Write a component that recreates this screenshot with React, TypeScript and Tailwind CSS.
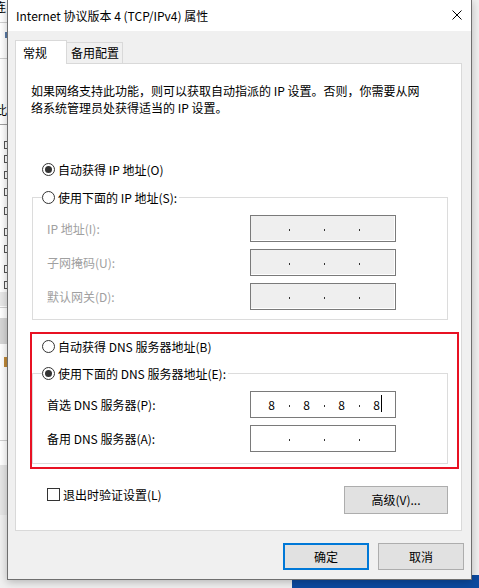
import React from "react";

const FONT = { fontFamily: "'Noto Sans CJK SC', 'Noto Sans', sans-serif" };

function Radio({ checked }: { checked?: boolean }) {
  return (
    <span className="w-[13px] h-[13px] rounded-full border border-[#333333] bg-white flex items-center justify-center shrink-0">
      {checked && <span className="w-[7px] h-[7px] rounded-full bg-[#333333]" />}
    </span>
  );
}

function IpBox({ disabled, values, cursor }: { disabled?: boolean; values?: string[]; cursor?: boolean }) {
  const v = values ?? ["", "", "", ""];
  return (
    <div
      className={
        "w-[146px] h-[27px] border border-[#7a7a7a] flex items-center pl-[5px] " +
        (disabled ? "bg-[#efefef] shadow-[inset_-1px_-1px_0_#ffffff]" : "bg-white")
      }
    >
      {v.map((d, i) => (
        <React.Fragment key={i}>
          <span className="w-[31px] h-[25px] flex items-center justify-center text-[12px] text-black relative">
            {d}
            {cursor && i === 3 && <span className="absolute left-[20px] top-[3px] w-[1px] h-[17px] bg-black" />}
          </span>
          {i < 3 && (
            <span className="w-[4px] h-[25px] flex items-center justify-center">
              <span className="w-[1px] h-[2px] mt-[3px] bg-[#333333]" />
            </span>
          )}
        </React.Fragment>
      ))}
    </div>
  );
}

function Row({ label, disabled, children }: { label: string; disabled?: boolean; children: React.ReactNode }) {
  return (
    <div className="flex items-center h-[27px]">
      <span className={"w-[203px] text-[12px] " + (disabled ? "text-[#a0a0a0]" : "text-black")}>{label}</span>
      {children}
    </div>
  );
}

export default function App() {
  return (
    <div className="relative w-[479px] h-[588px] overflow-hidden bg-[#f0f0f0]" style={FONT}>
      {/* desktop blue */}
      <div className="absolute left-[292px] top-[575px] right-0 bottom-0 bg-[#0c4aa0]" />
      {/* background window on the left */}
      <div className="absolute left-0 top-0 w-[8px] h-[515px] bg-white overflow-hidden">
        <div className="absolute left-[-6px] top-[-2px] text-[12px] text-black leading-[17px]">连</div>
        <div className="absolute left-0 top-[22px] w-full h-[1px] bg-[#d0d0d0]" />
        <div className="absolute left-[5px] top-[32px] w-[3px] h-[6px] bg-[#5a7ca8]" />
        <div className="absolute left-0 top-[58px] w-full h-[1px] bg-[#d0d0d0]" />
        <div className="absolute left-[-5px] top-[101px] text-[12px] text-black leading-[17px]">此</div>
        <div className="absolute left-0 top-[124px] w-full h-[1px] bg-[#a0a0a0]" />
        {[141, 155, 171, 188, 207, 228, 245, 265, 281].map((y) => (
          <div key={y} className="absolute left-[4px] top-[0px] w-[5px] h-[8px] border border-[#555555]" style={{ top: y }} />
        ))}
        <div className="absolute left-0 top-[292px] w-full h-[14px] bg-[#e8e8e8]" />
        <div className="absolute left-0 top-[307px] w-full h-[1px] bg-[#d0d0d0]" />
        <div className="absolute left-0 top-[318px] w-full h-[26px] bg-[#d6d6d6]" />
        <div className="absolute left-[4px] top-[357px] w-[3px] h-[10px] bg-[#c08a3a]" />
        <div className="absolute left-0 top-[440px] w-full h-[1px] bg-[#d0d0d0]" />
        <div className="absolute left-0 top-[465px] w-full h-[50px] bg-[#e6e6e6]" />
      </div>

      {/* dialog window */}
      <div className="absolute left-[7px] top-0 w-[465px] h-[580px] border-x border-b border-[#6f6f6f] bg-[#f0f0f0] flex flex-col shadow-[0_2px_8px_rgba(0,0,0,0.25)]">
        {/* title bar */}
        <div className="h-[31px] bg-white flex items-center justify-between pl-[8px] pr-[9px] shrink-0">
          <span className="text-[12px] text-black">Internet 协议版本 4 (TCP/IPv4) 属性</span>
          <svg width="10" height="10" viewBox="0 0 10 10" className="mb-[1px]">
            <path d="M0.5 0.5 L9.5 9.5 M9.5 0.5 L0.5 9.5" stroke="#000" strokeWidth="1" />
          </svg>
        </div>

        {/* tabs */}
        <div className="ml-[7px] mt-[9px] h-[23px] flex items-end relative z-10">
          <div className="w-[52px] h-[24px] mb-[-1px] border-t border-x border-[#d9d9d9] bg-white flex items-center pl-[7px] text-[12px] text-black">
            常规
          </div>
          <div className="w-[56px] h-[21px] border-t border-r border-[#d9d9d9] bg-[#f0f0f0] flex items-center pl-[4px] text-[12px] text-black">
            备用配置
          </div>
        </div>

        {/* panel */}
        <div className="ml-[7px] w-[447px] h-[468px] border border-[#d9d9d9] bg-white flex flex-col shrink-0">
          <div className="mt-[18px] pl-[15px] text-[12px] leading-[17px] text-black">
            <div>如果网络支持此功能，则可以获取自动指派的 IP 设置。否则，你需要从网</div>
            <div>络系统管理员处获得适当的 IP 设置。</div>
          </div>

          <div className="mt-[45px] ml-[26px] h-[17px] flex items-center gap-[3px] text-[12px] text-black">
            <Radio checked />
            <span>自动获得 IP 地址(O)</span>
          </div>

          {/* group 1 */}
          <div className="relative mt-[19px] ml-[16px] w-[416px] h-[123px] border border-[#dcdcdc] pt-[17px] pl-[14px] flex flex-col gap-[7px]">
            <div className="absolute left-[9px] top-[-9px] h-[17px] flex items-center gap-[3px] bg-white pr-[2px] text-[12px] text-black">
              <Radio />
              <span>使用下面的 IP 地址(S):</span>
            </div>
            <Row label="IP 地址(I):" disabled>
              <IpBox disabled />
            </Row>
            <Row label="子网掩码(U):" disabled>
              <IpBox disabled />
            </Row>
            <Row label="默认网关(D):" disabled>
              <IpBox disabled />
            </Row>
          </div>

          <div className="mt-[18px] ml-[26px] h-[17px] flex items-center gap-[3px] text-[12px] text-black">
            <Radio />
            <span>自动获得 DNS 服务器地址(B)</span>
          </div>

          {/* group 2 */}
          <div className="relative mt-[18px] ml-[16px] w-[416px] h-[91px] border border-[#dcdcdc] pt-[17px] pl-[14px] flex flex-col gap-[7px]">
            <div className="absolute left-[9px] top-[-9px] h-[17px] flex items-center gap-[3px] bg-white pr-[2px] text-[12px] text-black">
              <Radio checked />
              <span>使用下面的 DNS 服务器地址(E):</span>
            </div>
            <Row label="首选 DNS 服务器(P):">
              <IpBox values={["8", "8", "8", "8"]} cursor />
            </Row>
            <Row label="备用 DNS 服务器(A):">
              <IpBox />
            </Row>
          </div>

          <div className="mt-[22px] ml-[31px] mr-[13px] flex items-start justify-between">
            <div className="h-[17px] flex items-center gap-[3px] text-[12px] text-black">
              <span className="w-[13px] h-[13px] border border-[#333333] bg-white" />
              <span>退出时验证设置(L)</span>
            </div>
            <button className="w-[104px] h-[28px] border border-[#adadad] bg-[#e1e1e1] text-[12px] text-black flex items-center justify-center">
              高级(V)...
            </button>
          </div>
        </div>

        {/* bottom buttons */}
        <div className="mt-[12px] pr-[7px] flex justify-end gap-[9px]">
          <button className="w-[86px] h-[27px] border-2 border-[#0078d7] bg-[#e1e1e1] text-[12px] text-black flex items-center justify-center">
            确定
          </button>
          <button className="w-[86px] h-[27px] border border-[#adadad] bg-[#e1e1e1] text-[12px] text-black flex items-center justify-center">
            取消
          </button>
        </div>
      </div>

      {/* red annotation */}
      <div className="absolute left-[30px] top-[332px] w-[429px] h-[137px] border-2 border-[#e81123]" />
    </div>
  );
}
